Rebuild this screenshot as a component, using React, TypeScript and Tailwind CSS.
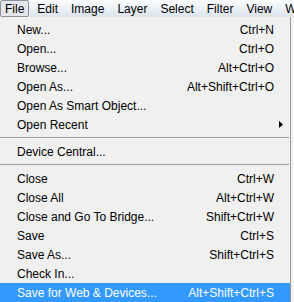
import type { ReactNode } from 'react'

type Item =
  | { kind: 'item'; label: string; shortcut?: string; submenu?: boolean; active?: boolean }
  | { kind: 'sep' }

const menuBar = ['File', 'Edit', 'Image', 'Layer', 'Select', 'Filter', 'View', 'Window']

const items: Item[] = [
  { kind: 'item', label: 'New...', shortcut: 'Ctrl+N' },
  { kind: 'item', label: 'Open...', shortcut: 'Ctrl+O' },
  { kind: 'item', label: 'Browse...', shortcut: 'Alt+Ctrl+O' },
  { kind: 'item', label: 'Open As...', shortcut: 'Alt+Shift+Ctrl+O' },
  { kind: 'item', label: 'Open As Smart Object...' },
  { kind: 'item', label: 'Open Recent', submenu: true },
  { kind: 'sep' },
  { kind: 'item', label: 'Device Central...' },
  { kind: 'sep' },
  { kind: 'item', label: 'Close', shortcut: 'Ctrl+W' },
  { kind: 'item', label: 'Close All', shortcut: 'Alt+Ctrl+W' },
  { kind: 'item', label: 'Close and Go To Bridge...', shortcut: 'Shift+Ctrl+W' },
  { kind: 'item', label: 'Save', shortcut: 'Ctrl+S' },
  { kind: 'item', label: 'Save As...', shortcut: 'Shift+Ctrl+S' },
  { kind: 'item', label: 'Check In...' },
  { kind: 'item', label: 'Save for Web & Devices...', shortcut: 'Alt+Shift+Ctrl+S', active: true },
]

function Row({ children, active }: { children: ReactNode; active?: boolean }) {
  return (
    <div
      className={`flex h-[19px] items-center pl-[17px] ${
        active ? 'bg-[#3399ff] text-white' : 'text-black'
      }`}
    >
      {children}
    </div>
  )
}

export default function App() {
  return (
    <div
      className="h-[302px] w-[294px] overflow-hidden bg-[#f4f4f4] text-[12px] leading-none"
      style={{ fontFamily: '"Liberation Sans", Arial, sans-serif' }}
    >
      {/* Menu bar */}
      <div className="flex h-[17px] items-stretch whitespace-nowrap bg-gradient-to-b from-[#fbfcfd] to-[#dce4ef]">
        {menuBar.map((name, i) => (
          <div
            key={name}
            className={`flex shrink-0 items-center ${
              i === 0
                ? 'mr-[1px] rounded-[2px] border border-[#8d9199] bg-[#e4e8ee] px-[4px]'
                : 'pl-[7px] pr-[6px]'
            }`}
          >
            {name}
          </div>
        ))}
      </div>

      {/* Dropdown */}
      <div className="w-[291px] border-r border-[#979797] bg-[#f0f0f0] pt-[3px]">
        {items.map((it, i) =>
          it.kind === 'sep' ? (
            <div key={i} className="flex h-[8px] items-center pr-[1px]">
              <div className="h-[2px] w-full border-t border-[#a0a0a0] border-b-white" />
            </div>
          ) : (
            <Row key={i} active={it.active}>
              <span className="flex-1 whitespace-nowrap">{it.label}</span>
              {it.shortcut && <span className="whitespace-nowrap">{it.shortcut}</span>}
              <span className="flex w-[16px] shrink-0 items-center pl-[5px]">
                {it.submenu && (
                  <svg width="4" height="7" viewBox="0 0 4 7">
                    <path d="M0 0 L4 3.5 L0 7 Z" fill="#000" />
                  </svg>
                )}
              </span>
            </Row>
          ),
        )}
      </div>
    </div>
  )
}
